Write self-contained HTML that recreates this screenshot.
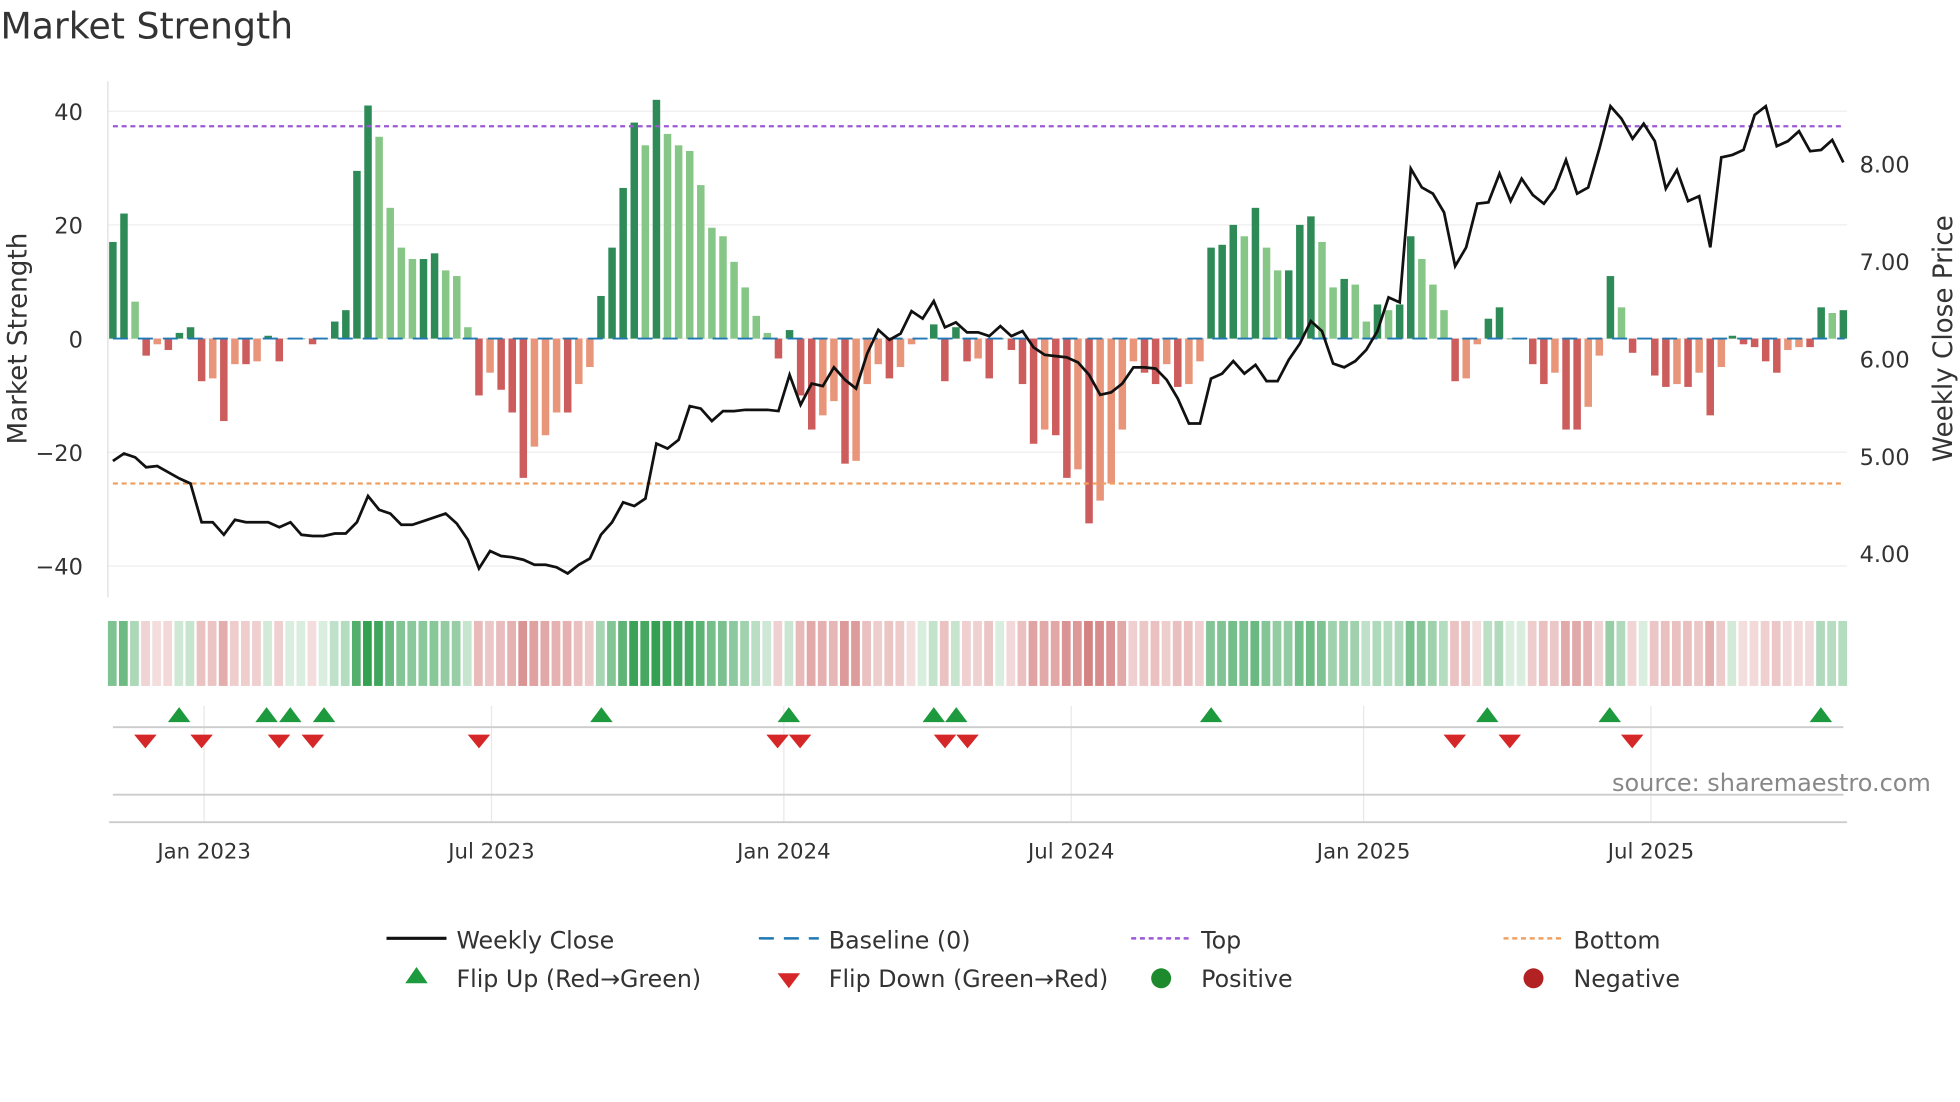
<!DOCTYPE html>
<html><head><meta charset="utf-8"><style>
html,body{margin:0;padding:0;background:#fff;}
svg{display:block;font-family:"DejaVu Sans","Liberation Sans",sans-serif;}
</style></head><body>
<svg id="s" width="1960" height="1102" viewBox="0 0 1568 882" xmlns="http://www.w3.org/2000/svg">
<rect width="1568" height="882" fill="#fff"/>
<text x="0" y="31" font-size="29" fill="#333">Market Strength</text>
<g id="g"></g>
<g font-size="18" fill="#333">
<text x="66" y="96" text-anchor="end">40</text>
<text x="66" y="187" text-anchor="end">20</text>
<text x="66" y="278" text-anchor="end">0</text>
<text x="66" y="369" text-anchor="end">−20</text>
<text x="66" y="460" text-anchor="end">−40</text>
<text x="1488" y="138">8.00</text>
<text x="1488" y="216">7.00</text>
<text x="1488" y="294">6.00</text>
<text x="1488" y="372">5.00</text>
<text x="1488" y="450">4.00</text>
<text transform="translate(21,271) rotate(-90)" text-anchor="middle" font-size="21">Market Strength</text>
<text transform="translate(1562,271) rotate(-90)" text-anchor="middle" font-size="21">Weekly Close Price</text>
<text x="163" y="687" text-anchor="middle" font-size="17">Jan 2023</text>
<text x="393" y="687" text-anchor="middle" font-size="17">Jul 2023</text>
<text x="627" y="687" text-anchor="middle" font-size="17">Jan 2024</text>
<text x="857" y="687" text-anchor="middle" font-size="17">Jul 2024</text>
<text x="1091" y="687" text-anchor="middle" font-size="17">Jan 2025</text>
<text x="1321" y="687" text-anchor="middle" font-size="17">Jul 2025</text>
<text x="1545" y="633" text-anchor="end" font-size="19.2" fill="#888">source: sharemaestro.com</text>
</g>
<g font-size="19" fill="#333">
<line x1="309" y1="751" x2="357" y2="751" stroke="#111" stroke-width="2.5"/>
<text x="365" y="759">Weekly Close</text>
<line x1="607" y1="751" x2="655" y2="751" stroke="#1f77b4" stroke-width="2" stroke-dasharray="12,8"/>
<text x="663" y="759">Baseline (0)</text>
<line x1="905" y1="751" x2="953" y2="751" stroke="#9b59d6" stroke-width="2" stroke-dasharray="4,3"/>
<text x="961" y="759">Top</text>
<line x1="1203" y1="751" x2="1251" y2="751" stroke="#f0a060" stroke-width="2" stroke-dasharray="4,3"/>
<text x="1259" y="759">Bottom</text>
<polygon points="333,774 324,787 342,787" fill="#1e9a3e"/>
<text x="365" y="790">Flip Up (Red→Green)</text>
<polygon points="622,779 640,779 631,791" fill="#d62728"/>
<text x="663" y="790">Flip Down (Green→Red)</text>
<circle cx="929" cy="783" r="8" fill="#1e8a2e"/>
<text x="961" y="790">Positive</text>
<circle cx="1227" cy="783" r="8" fill="#b22222"/>
<text x="1259" y="790">Negative</text>
</g>
</svg>
<script>
var v=[17,22,6.5,-3,-1,-2,1,2,-7.5,-7,-14.5,-4.5,-4.5,-4,0.5,-4,0,0,-1,0,3,5,29.5,41,35.5,23,16,14,14,15,12,11,2,-10,-6,-9,-13,-24.5,-19,-17,-13,-13,-8,-5,7.5,16,26.5,38,34,42,36,34,33,27,19.5,18,13.5,9,4,1,-3.5,1.5,-10,-16,-13.5,-11,-22,-21.5,-8,-4.5,-7,-5,-1,0,2.5,-7.5,2,-4,-3.5,-7,0,-2,-8,-18.5,-16,-17,-24.5,-23,-32.5,-28.5,-25.5,-16,-4,-6,-8,-4.5,-8.5,-8,-4,16,16.5,20,18,23,16,12,12,20,21.5,17,9,10.5,9.5,3,6,5,6,18,14,9.5,5,-7.5,-7,-1,3.5,5.5,0,0,-4.5,-8,-6,-16,-16,-12,-3,11,5.5,-2.5,0,-6.5,-8.5,-8,-8.5,-6,-13.5,-5,0.5,-1,-1.5,-4,-6,-2,-1.5,-1.5,5.5,4.5,5];
var c=[369,363,366,374,373,378,383,387,418,418,428,416,418,418,418,422,418,428,429,429,427,427,418,397,408,411,420,420,417,414,411,419,432,455,441,445,446,448,452,452,454,459,452,447,428,418,402,405,399,355,359,352,325,327,337,329,329,328,328,328,329,300,324,307,309,294,304,311,283,264,272,267,249,255,241,262,258,266,266,269,261,269,265,278,284,285,286,290,300,316,314,307,294,294,295,304,319,339,339,303,299,289,299,292,305,305,288,275,257,265,291,294,289,280,265,238,242,135,150,155,170,213,198,163,162,139,161,143,156,163,151,128,155,150,119,85,95,111,99,113,151,136,161,157,198,126,124,120,92,85,117,113,105,121,120,112,130];
var n=v.length,dx=(1475-90)/(n-1),h='';
var X=function(i){return 90+i*dx};
[89,180,271,362,453].forEach(function(y){h+='<line x1="86" y1="'+y+'" x2="1478" y2="'+y+'" stroke="#eee" stroke-width="1"/>'});
h+='<line x1="86" y1="65" x2="86" y2="478" stroke="#ddd"/>';
[163,393,627,857,1091,1321].forEach(function(x){h+='<line x1="'+x+'" y1="565" x2="'+x+'" y2="658" stroke="#e8e8e8"/>'});
for(var i=0;i<n;i++){var y0=271,y1=271-v[i]*4.55,p=i?v[i-1]:0;
var dark=Math.abs(v[i])>=Math.abs(p)||(v[i]*p<=0);
var col=v[i]>=0?(dark?'#2e8b57':'#86c687'):(dark?'#cd5c5c':'#e8957a');
h+='<rect x="'+(X(i)-3)+'" y="'+Math.min(y0,y1)+'" width="6" height="'+Math.max(Math.abs(y1-y0),0.5)+'" fill="'+col+'"/>';}
h+='<line x1="90" y1="271" x2="1476" y2="271" stroke="#1f77b4" stroke-width="1.5" stroke-dasharray="12,8"/>';
h+='<line x1="90" y1="101" x2="1476" y2="101" stroke="#9b59d6" stroke-width="1.8" stroke-dasharray="4,3"/>';
h+='<line x1="90" y1="387" x2="1476" y2="387" stroke="#f0a060" stroke-width="1.8" stroke-dasharray="4,3"/>';
var pts=c.map(function(y,i){return X(i).toFixed(1)+','+y}).join(' ');
h+='<polyline points="'+pts+'" fill="none" stroke="#111" stroke-width="2.2"/>';
function mix(a,t){return 'rgb('+a.map(function(k){return Math.round(255+(k-255)*t)}).join(',')+')'}
for(var i=0;i<n;i++){var t=Math.min(Math.abs(v[i])/40,1);t=0.18+0.82*Math.pow(t,0.7);
var col=v[i]>=0?mix([52,160,82],t):mix([200,90,90],t*0.85);
h+='<rect x="'+(X(i)-4)+'" y="497" width="7" height="52" fill="'+col+'"/>';}
h+='<line x1="90" y1="582" x2="1475" y2="582" stroke="#ccc" stroke-width="1.5"/>';
h+='<line x1="90" y1="636" x2="1475" y2="636" stroke="#ccc" stroke-width="1.5"/>';
h+='<line x1="87" y1="658" x2="1478" y2="658" stroke="#ccc" stroke-width="1.5"/>';
[143,213,232,259,481,631,747,765,969,1190,1288,1457].forEach(function(x){h+='<polygon points="'+x+',566 '+(x-9)+',578 '+(x+9)+',578" fill="#1e9a3e"/>'});
[116,161,223,250,383,622,640,756,774,1164,1208,1306].forEach(function(x){h+='<polygon points="'+(x-9)+',588 '+(x+9)+',588 '+x+',599" fill="#d62728"/>'});
document.getElementById('g').innerHTML=h;
</script>
</body></html>
